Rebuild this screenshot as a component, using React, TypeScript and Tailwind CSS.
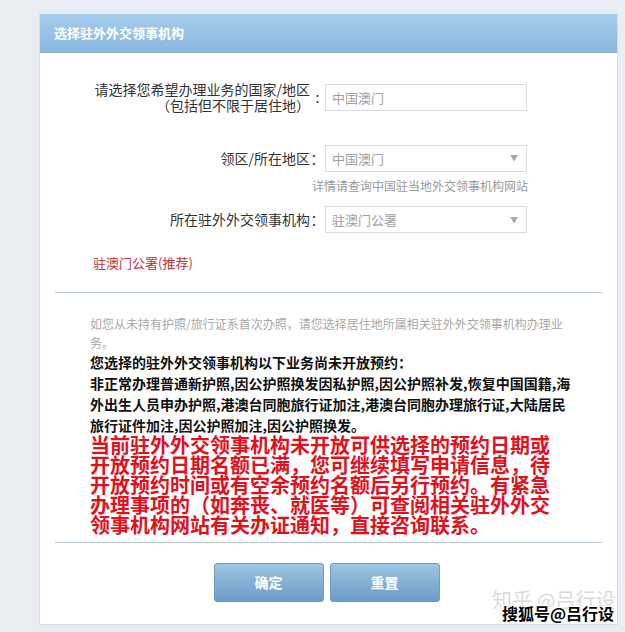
import React from "react";

const font = { fontFamily: '"Noto Sans CJK SC", "Noto Sans", sans-serif' };

function Field({ value, select }: { value: string; select?: boolean }) {
  return (
    <div className="w-[202px] h-[27px] border border-[#dcdcdc] bg-white flex items-center justify-between pl-[6px] pr-[8px]">
      <span className="text-[13px] text-[#a0a0a0] leading-none">{value}</span>
      {select && <span className="text-[8px] text-[#a8a8a8] leading-none">▼</span>}
    </div>
  );
}

export default function App() {
  return (
    <div className="w-[625px] h-[632px] bg-[#eaeef2] pt-[14px] pl-[39px] pr-[7px] overflow-hidden relative" style={font}>
      <div className="w-[579px] h-[611px] bg-white border border-[#d6dde4] border-t-0 flex flex-col">
        <div className="h-[39px] bg-gradient-to-b from-[#a6cdec] to-[#8ab7df] flex items-center pl-[14px] border-b border-[#8fb2d0]">
          <span className="text-[13px] font-bold text-white">选择驻外外交领事机构</span>
        </div>

        <div className="flex flex-col pt-[29px]">
          {/* row 1 */}
          <div className="flex items-center h-[30px]">
            <div className="w-[270px] text-right text-[14px] leading-[16px] text-[#333]">
              <div>请选择您希望办理业务的国家/地区</div>
              <div>（包括但不限于居住地）</div>
            </div>
            <span className="w-[15px] text-center text-[14px] text-[#333]">:</span>
            <Field value="中国澳门" />
          </div>

          {/* row 2 */}
          <div className="flex items-center h-[28px] mt-[32px]">
            <div className="w-[270px] text-right text-[14px] text-[#333]">领区/所在地区</div>
            <span className="w-[15px] text-center text-[14px] text-[#333]">：</span>
            <Field value="中国澳门" select />
          </div>
          <div className="w-[488px] text-right text-[12px] leading-[16px] text-[#9a9a9a] mt-[6px]">
            详情请查询中国驻当地外交领事机构网站
          </div>

          {/* row 3 */}
          <div className="flex items-center h-[27px] mt-[12px]">
            <div className="w-[270px] text-right text-[14px] text-[#333]">所在驻外外交领事机构</div>
            <span className="w-[15px] text-center text-[14px] text-[#333]">：</span>
            <Field value="驻澳门公署" select />
          </div>

          <div className="pl-[53px] mt-[21px] text-[13px] leading-[18px] text-[#c4343a]">驻澳门公署(推荐)</div>

          <div className="mx-[15px] mt-[20px] h-px bg-[#b7c7d3]" />

          <div className="pl-[50px] w-[532px] mt-[21px]">
            <div className="text-[12px] leading-[19px] text-[#a8a8a8]">
              如您从未持有护照/旅行证系首次办照，请您选择居住地所属相关驻外外交领事机构办理业务。
            </div>
            <div className="text-[14px] leading-[21px] font-bold text-[#111]">
              <div>您选择的驻外外交领事机构以下业务尚未开放预约：</div>
              <div>
                非正常办理普通新护照,因公护照换发因私护照,因公护照补发,恢复中国国籍,海外出生人员申办护照,港澳台同胞旅行证加注,港澳台同胞办理旅行证,大陆居民旅行证件加注,因公护照加注,因公护照换发。
              </div>
            </div>
            <div className="text-[20px] leading-[20px] font-bold text-[#e3101c] -mt-[1px]">
              当前驻外外交领事机构未开放可供选择的预约日期或
              <br />
              开放预约日期名额已满，您可继续填写申请信息，待
              <br />
              开放预约时间或有空余预约名额后另行预约。有紧急
              <br />
              办理事项的（如奔丧、就医等）可查阅相关驻外外交
              <br />
              领事机构网站有关办证通知，直接咨询联系。
            </div>
          </div>

          <div className="mx-[15px] mt-[7px] h-px bg-[#b7c7d3]" />

          <div className="flex justify-center gap-[6px] mt-[20px] pr-[4px]">
            <button className="w-[110px] h-[39px] rounded-[3px] border border-[#6f9cc4] bg-gradient-to-b from-[#9fc5e1] to-[#6b9ccb] text-white font-bold text-[14px]">
              确定
            </button>
            <button className="w-[110px] h-[39px] rounded-[3px] border border-[#6f9cc4] bg-gradient-to-b from-[#9fc5e1] to-[#6b9ccb] text-white font-bold text-[14px]">
              重置
            </button>
          </div>
        </div>
      </div>

      <div className="absolute left-[492px] top-[588px] text-[20px] leading-[24px] text-[#dadada] whitespace-nowrap">
        知乎 @吕行设
      </div>
      <div
        className="absolute left-[502px] top-[602px] text-[16px] leading-[22px] font-bold text-black whitespace-nowrap"
        style={{ textShadow: "1px 0 #fff, -1px 0 #fff, 0 1px #fff, 0 -1px #fff, 1px 1px #fff, -1px -1px #fff, 1px -1px #fff, -1px 1px #fff" }}
      >
        搜狐号@吕行设
      </div>
    </div>
  );
}
